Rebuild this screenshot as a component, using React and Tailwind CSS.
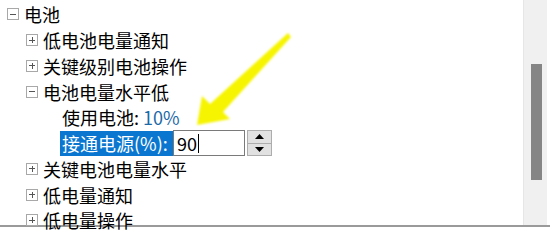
import React from "react";

const font = { fontFamily: '"Noto Sans CJK SC", "Noto Sans", sans-serif' };

const Toggle = ({ open }) => (
  <span className="w-[12px] h-[12px] border border-[#a8a8a8] bg-white flex items-center justify-center relative shrink-0">
    <span className="absolute w-[6px] h-px bg-[#555]" />
    {!open && <span className="absolute w-px h-[6px] bg-[#555]" />}
  </span>
);

const Row = ({ indent, open, children }) => (
  <div className={`h-[25.75px] flex items-center gap-[5px] ${indent}`}>
    {open !== undefined && <Toggle open={open} />}
    {children}
  </div>
);

export default function App() {
  return (
    <div
      className="w-[550px] h-[230px] relative overflow-hidden bg-white text-[18px] text-black leading-none"
      style={font}
    >
      <div className="flex h-[227px] border-b-2 border-[#9a9a9a]">
        <div className="flex-1 pt-[1.5px]">
          <Row indent="pl-[7px]" open={true}>
            <span>电池</span>
          </Row>
          <Row indent="pl-[26px]" open={false}>
            <span>低电池电量通知</span>
          </Row>
          <Row indent="pl-[26px]" open={false}>
            <span>关键级别电池操作</span>
          </Row>
          <Row indent="pl-[26px]" open={true}>
            <span>电池电量水平低</span>
          </Row>
          <Row indent="pl-[62px]">
            <span>
              使用电池: <span className="text-[#1c6aa8]">10%</span>
            </span>
          </Row>
          <div className="h-[25.75px] flex items-center pl-[60px]">
            <span className="h-[25px] flex items-center px-[2px] bg-[#0a76cf] text-white w-[113px]">
              接通电源(%):
            </span>
            <div className="h-[26px] w-[72px] border border-[#7a7a7a] bg-white flex items-center pl-[3px]">
              <span>90</span>
              <span className="w-px h-[19px] bg-black ml-px" />
            </div>
            <div className="ml-[2px] h-[26px] w-[25px] flex flex-col border border-[#adadad] bg-[#e1e1e1]">
              <div className="flex-1 flex items-center justify-center border-b border-[#adadad]">
                <svg width="9" height="5" viewBox="0 0 9 5">
                  <path d="M0 5 L4.5 0 L9 5 Z" fill="#000" />
                </svg>
              </div>
              <div className="flex-1 flex items-center justify-center">
                <svg width="9" height="5" viewBox="0 0 9 5">
                  <path d="M0 0 L4.5 5 L9 0 Z" fill="#000" />
                </svg>
              </div>
            </div>
          </div>
          <Row indent="pl-[26px]" open={false}>
            <span>关键电池电量水平</span>
          </Row>
          <Row indent="pl-[26px]" open={false}>
            <span>低电量通知</span>
          </Row>
          <Row indent="pl-[26px]" open={false}>
            <span>低电量操作</span>
          </Row>
        </div>
        <div className="w-[24px] mr-[3px] bg-[#f0f0f0] border-l border-[#e6e6e6] pt-[64px]">
          <div className="ml-[7px] w-[11px] h-[116px] bg-[#858585]" />
        </div>
      </div>
      <svg
        className="absolute left-0 top-0 pointer-events-none"
        width="550"
        height="230"
        viewBox="0 0 550 230"
      >
        <defs>
          <filter id="soft" x="-10%" y="-10%" width="120%" height="120%">
            <feGaussianBlur stdDeviation="0.8" />
          </filter>
        </defs>
        <path
          d="M288 33 L291 37 L223 112 L230 119 L197 125 L202 96 L210 104 Z"
          fill="#f6f400"
          filter="url(#soft)"
        />
      </svg>
    </div>
  );
}
